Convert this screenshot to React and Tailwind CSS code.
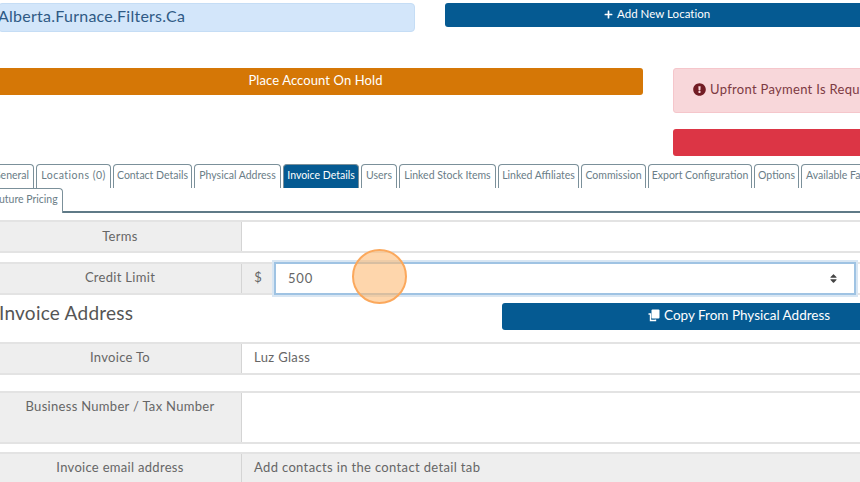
import React from "react";
import { FaExclamationCircle, FaPlus, FaSort } from "react-icons/fa";

const tabs = [
  ["General", "w-[46px]"],
  ["Locations (0)", "w-[75px] tracking-[0.5px]"],
  ["Contact Details", "w-[79px]"],
  ["Physical Address", "w-[87px]"],
  ["Invoice Details", "w-[76px]"],
  ["Users", "w-[36px]"],
  ["Linked Stock Items", "w-[97px]"],
  ["Linked Affiliates", "w-[81px]"],
  ["Commission", "w-[65px]"],
  ["Export Configuration", "w-[104px]"],
  ["Options", "w-[45px]"],
  ["Available Facilities", "w-[100px]"],
];

const CopyIcon = () => (
  <svg viewBox="0 0 13 13" className="w-[13px] h-[13px] mr-[4px]">
    <path d="M1.5 5h2v6.5h5v-1" fill="none" stroke="currentColor" strokeWidth="1.4" />
    <rect x="4.5" y="0.5" width="8" height="9" rx="1" fill="currentColor" />
  </svg>
);

const Tab = ({ name, className = "" }) => (
  <div className={`h-[24px] shrink-0 mr-[2px] border border-b-0 border-[#7b909a] rounded-t-[4px] text-[10.5px] leading-[21px] text-center whitespace-nowrap ${className}`}>
    {name}
  </div>
);

const Label = ({ children, className = "" }) => (
  <div className={`w-[243px] shrink-0 bg-[#eeeeee] border-r border-[#d4d4d4] text-center text-[13px] tracking-[0.3px] text-[#666] ${className}`}>
    {children}
  </div>
);

const Row = ({ label, value, tall, muted, leading = "leading-[26px]", className = "" }) => (
  <div className={`flex border-y-2 border-[#e3e3e3] ${tall ? "h-[53px]" : "h-[33px]"} ${className}`}>
    <Label className={tall ? "pt-[4px]" : leading}>{label}</Label>
    <div className={`flex-1 pl-[12px] text-[13px] tracking-[0.35px] text-[#666] ${leading} ${muted ? "bg-[#eeeeee]" : "bg-white"}`}>
      {value}
    </div>
  </div>
);

export default function App() {
  return (
    <div className="relative w-[860px] h-[482px] overflow-hidden bg-white font-['Lato','Liberation_Sans',sans-serif]">
      <div className="w-[900px] pt-[3px]">
        <div className="flex h-[65px]">
          <div className="w-[417px] -ml-[2px] mr-[30px] h-[29px] bg-[#d3e6fa] border border-[#c5ddf5] rounded text-[#2f5a85] text-[16px] tracking-[0.25px] leading-[24px] overflow-hidden whitespace-nowrap">
            <span className="block -ml-[1px]">Alberta.Furnace.Filters.Ca</span>
          </div>
          <div className="w-[455px] h-[24px] pb-[2px] bg-[#055a92] rounded-[3px] text-white text-[11.5px] tracking-[0.03px] flex items-center pl-[159px]">
            <FaPlus className="w-[9px] h-[9px] mr-[4px]" />
            Add New Location
          </div>
        </div>

        <div className="flex h-[96px]">
          <div className="w-[655px] -ml-[12px] mr-[30px] h-[27px] bg-[#d57706] rounded-[3px] text-white text-[13px] tracking-[0.1px] text-center leading-[25px]">
            Place Account On Hold
          </div>
          <div className="w-[227px]">
            <div className="h-[45px] pb-[2px] bg-[#f8d7da] border border-[#f5c6cb] rounded-[3px] flex items-center pl-[19px] text-[13px] tracking-[0.3px] text-[#7d3a42] whitespace-nowrap overflow-hidden">
              <FaExclamationCircle className="w-[13px] h-[13px] mr-[4px] shrink-0 text-[#721c24]" />
              Upfront Payment Is Required
            </div>
            <div className="h-[27px] mt-[16px] bg-[#dc3545] rounded-[3px]" />
          </div>
        </div>

        <div className="-ml-[12px] w-[912px] h-[49px] border-b-2 border-[#5f7a87]">
          <div className="flex">
            {tabs.map(([name, width], i) => (
              <Tab
                key={name}
                name={name}
                className={`${width} ${i === 4 ? "bg-[#055a92] text-white" : "text-[#6a7d87]"} ${i === 11 ? "text-left pl-[4px]" : ""}`}
              />
            ))}
          </div>
          <Tab name="Future Pricing" className="w-[75px] h-[25px] bg-white text-[#6a7d87]" />
        </div>

        <div className="mt-[7px] -ml-[1px]">
          <Row label="Terms" leading="leading-[28px]" />
          <div className="flex h-[33px] mt-[9px] border-y-2 border-[#e3e3e3]">
            <Label className="leading-[26px]">Credit Limit</Label>
            <div className="w-[32px] shrink-0 bg-[#eeeeee] text-center text-[13px] text-[#666] leading-[26px]">$</div>
            <div className="w-[582px] shrink-0 flex items-center justify-between pl-3 pr-[15px] bg-white border-2 border-[#9fc3e3] text-[13px] tracking-[0.8px] text-[#666] -my-[2px] ring-2 ring-[#d8e6f3]">
              500
              <FaSort className="w-[11px] h-[11px] text-[#444]" />
            </div>
          </div>

          <div className="flex items-start h-[39px] mt-[8px]">
            <h2 className="w-[503px] text-[19px] tracking-[0.25px] text-[#555] leading-[20px]">Invoice Address</h2>
            <div className="w-[398px] h-[27px] pb-[2px] bg-[#055a92] rounded-[3px] text-white text-[13.5px] flex items-center pl-[145px]">
              <CopyIcon />
              Copy From Physical Address
            </div>
          </div>

          <Row label="Invoice To" value="Luz Glass" />
          <Row label="Business Number / Tax Number" tall className="mt-[16px]" />
          <Row label="Invoice email address" value="Add contacts in the contact detail tab" muted className="mt-[8px]" />
        </div>
      </div>

      <div className="absolute left-[352px] top-[249px] w-[55px] h-[55px] rounded-full bg-[#fdba74]/60 border-2 border-[#fba85c]" />
    </div>
  );
}
